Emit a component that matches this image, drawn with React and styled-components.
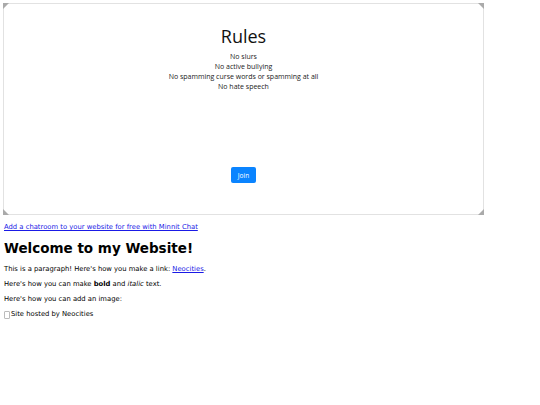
import React from "react";
import styled, { createGlobalStyle } from "styled-components";

const Global = createGlobalStyle`
  body {
    margin: 3px;
    font-family: "DejaVu Sans", Verdana, sans-serif;
    font-size: 6.8px;
    color: #000;
    background: #fff;
  }
`;

const rules = [
  "No slurs",
  "No active bullying",
  "No spamming curse words or spamming at all",
  "No hate speech",
];

function App() {
  return (
    <>
      <Global />
      <ChatFrame>
        <Corner $pos="tl" />
        <Corner $pos="tr" />
        <Corner $pos="bl" />
        <Corner $pos="br" />
        <Title>Rules</Title>
        <RuleList>
          {rules.map((r) => (
            <li key={r}>{r}</li>
          ))}
        </RuleList>
        <JoinButton>Join</JoinButton>
      </ChatFrame>
      <Page>
        <Link href="#">Add a chatroom to your website for free with Minnit Chat</Link>
        <Heading>Welcome to my Website!</Heading>
        <Para>
          This is a paragraph! Here's how you make a link: <Link href="#">Neocities</Link>.
        </Para>
        <Para>
          Here's how you can make <b>bold</b> and <i>italic</i> text.
        </Para>
        <Para>Here's how you can add an image:</Para>
        <Broken>
          <BrokenIcon />
          Site hosted by Neocities
        </Broken>
      </Page>
    </>
  );
}

export default App;

const ChatFrame = styled.div`
  position: relative;
  box-sizing: border-box;
  width: 481px;
  height: 212px;
  border: 1px solid #e2e2e2;
  border-radius: 4px;
  display: flex;
  flex-direction: column;
  align-items: center;
  padding-top: 20px;
  font-family: "Open Sans", "Noto Sans", sans-serif;
`;

const Corner = styled.span`
  position: absolute;
  width: 0;
  height: 0;
  border: 3px solid transparent;
  ${({ $pos }) =>
    $pos === "tl"
      ? "top: -1px; left: -1px; border-top-color: #aaa; border-left-color: #aaa;"
      : $pos === "tr"
      ? "top: -1px; right: -1px; border-top-color: #aaa; border-right-color: #aaa;"
      : $pos === "bl"
      ? "bottom: -1px; left: -1px; border-bottom-color: #aaa; border-left-color: #aaa;"
      : "bottom: -1px; right: -1px; border-bottom-color: #aaa; border-right-color: #aaa;"}
`;

const Title = styled.h1`
  margin: 0 0 4px;
  font-size: 18px;
  font-weight: 400;
  line-height: 24px;
  color: #111;
`;

const RuleList = styled.ul`
  list-style: none;
  margin: 0;
  padding: 0;
  text-align: center;
  font-size: 7px;
  line-height: 10px;
  color: #222;
`;

const JoinButton = styled.button`
  margin-top: 75px;
  width: 25px;
  height: 16px;
  padding: 0;
  border: none;
  border-radius: 2px;
  background: #0a84ff;
  color: #fff;
  font-family: "Open Sans", sans-serif;
  font-size: 6.5px;
`;

const Page = styled.div`
  padding: 8px 1px 0;
`;

const Link = styled.a`
  color: #1a1ae6;
  text-decoration: underline;
`;

const Heading = styled.h1`
  margin: 8px 0 8px;
  font-size: 13.5px;
  font-weight: bold;
  line-height: 18px;
`;

const Para = styled.p`
  margin: 0 0 6px;
  line-height: 9px;
`;

const Broken = styled.div`
  display: flex;
  align-items: center;
  line-height: 9px;
`;

const BrokenIcon = styled.span`
  display: inline-block;
  width: 4px;
  height: 6px;
  border: 1px solid #bbb;
  border-radius: 1px;
  margin-right: 1px;
`;
